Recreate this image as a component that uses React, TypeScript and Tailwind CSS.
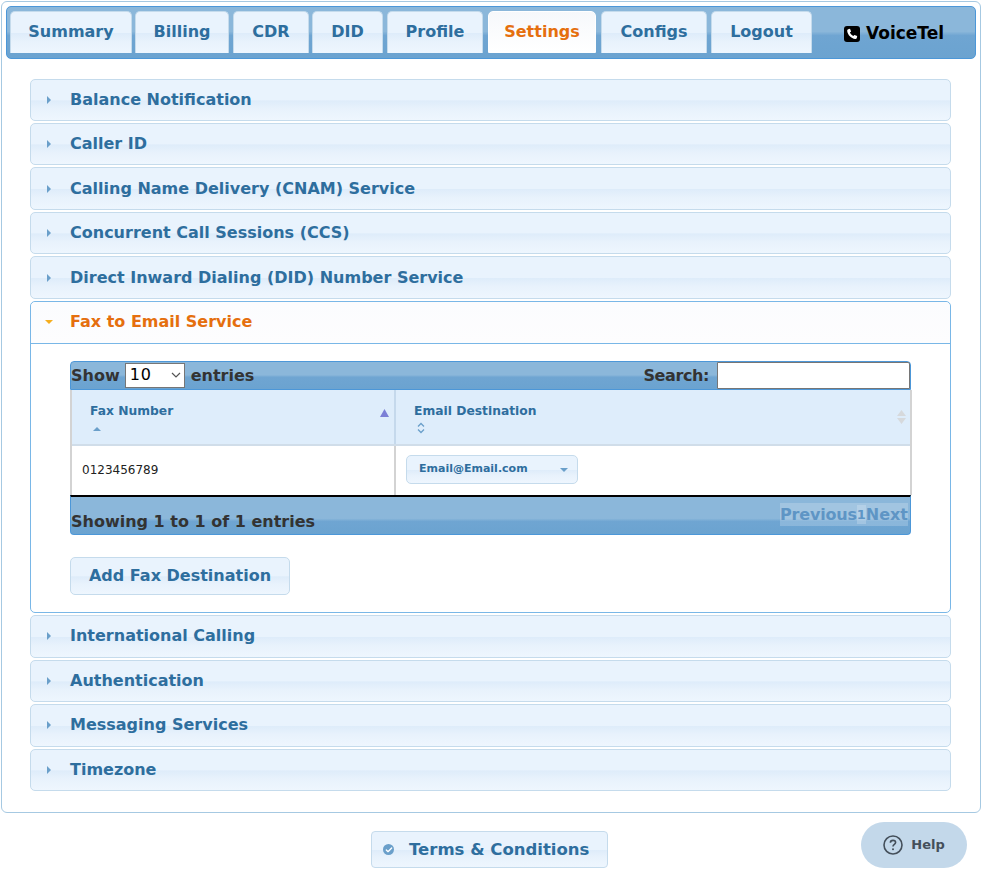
import { Check } from 'lucide-react';

const font = "[font-family:'DejaVu_Sans',sans-serif]";

const tabs = [
  { name: 'Summary', w: 'w-[122px]', ml: '' },
  { name: 'Billing', w: 'w-[94px]', ml: 'ml-[3px]' },
  { name: 'CDR', w: 'w-[76px]', ml: 'ml-[4px]' },
  { name: 'DID', w: 'w-[71px]', ml: 'ml-[3px]' },
  { name: 'Profile', w: 'w-[96px]', ml: 'ml-[4px]' },
  { name: 'Settings', w: 'w-[108px]', ml: 'ml-[5px]' },
  { name: 'Configs', w: 'w-[106px]', ml: 'ml-[5px]' },
  { name: 'Logout', w: 'w-[101px]', ml: 'ml-[4px]' },
];

const lightBtn =
  'bg-[linear-gradient(#e9f3fd_0%,#e9f3fd_50%,#deecfa_52%,#e8f2fc_72%,#eef6fe_100%)] border border-[#c5dbec] text-[#2e6e9e]';
const barBg = 'bg-[linear-gradient(#8bb7da_0%,#8bb7da_48%,#6fa5d2_56%,#6ba3d0_100%)]';
const footBg = 'bg-[linear-gradient(#8bb7da_0%,#8bb7da_58%,#6fa5d2_66%,#6ba3d0_100%)]';

function Row({ label, h }: { label: string; h: string }) {
  return (
    <div className={`flex ${h} items-center rounded-[5px] ${lightBtn}`}>
      <svg width="4" height="8" viewBox="0 0 4 8" className="ml-[16px]">
        <path d="M0 0 L4 4 L0 8 Z" fill="#6a9fca" />
      </svg>
      <span className="ml-[19px] text-[16px] font-bold">{label}</span>
    </div>
  );
}

export default function App() {
  const top = [
    { label: 'Balance Notification', h: 'h-[42px]' },
    { label: 'Caller ID', h: 'h-[42px]' },
    { label: 'Calling Name Delivery (CNAM) Service', h: 'h-[43px]' },
    { label: 'Concurrent Call Sessions (CCS)', h: 'h-[42px]' },
    { label: 'Direct Inward Dialing (DID) Number Service', h: 'h-[43px]' },
  ];
  const bottom = [
    { label: 'International Calling', h: 'h-[43px] pb-px' },
    { label: 'Authentication', h: 'h-[42px]' },
    { label: 'Messaging Services', h: 'h-[43px] pb-px' },
    { label: 'Timezone', h: 'h-[42px]' },
  ];

  return (
    <div className={`relative h-[878px] w-[984px] overflow-hidden bg-white pt-px pl-px ${font}`}>
      <div className="h-[812px] w-[980px] rounded-[6px] border border-[#a6c9e2] bg-white p-1">
        {/* nav bar */}
        <div className={`flex h-[53px] w-[970px] rounded-[5px] border border-[#4c97d8] pt-1 pl-[3px] ${barBg}`}>
          {tabs.map((t) => (
            <div
              key={t.name}
              className={`${t.w} ${t.ml} flex h-[42px] items-center justify-center rounded-t-[5px] pb-px text-[16px] font-bold ${
                t.name === 'Settings'
                  ? 'border border-white bg-[linear-gradient(#f6f8fb,#ffffff)] text-[#e56f0e]'
                  : lightBtn + ' border-b-0'
              }`}
            >
              {t.name}
            </div>
          ))}
          <div className="ml-[32px] flex h-[45px] items-center text-[17px] font-bold text-black">
            <svg width="16" height="16" viewBox="0 0 16 16" className="mr-[6px]">
              <rect width="16" height="16" rx="3" fill="#000" />
              <path d="M4.2 3.2 L6 2.8 L7.1 5.6 L5.9 6.6 C6.5 8 7.8 9.4 9.3 10 L10.4 8.9 L13.2 10 L12.8 11.9 C12.6 12.7 11.9 13 11.2 12.9 C7.2 12.4 3.7 8.9 3.2 4.9 C3.1 4.2 3.5 3.5 4.2 3.2 Z" fill="#fff" />
            </svg>
            VoiceTel
          </div>
        </div>

        {/* accordion */}
        <div className="mt-[20px] ml-[24px] flex w-[921px] flex-col gap-[2px]">
          {top.map((r) => (
            <Row key={r.label} label={r.label} h={r.h} />
          ))}
          <div className="rounded-[5px] border border-[#79b7e7] bg-white">
            <div className="flex h-[42px] items-center rounded-t-[5px] border-b border-[#79b7e7] bg-[linear-gradient(#fbfcfe,#fdfdfe)] pb-px">
              <svg width="8" height="4" viewBox="0 0 8 4" className="ml-[14px]">
                <path d="M0 0 L8 0 L4 4 Z" fill="#f5ae1f" />
              </svg>
              <span className="ml-[17px] text-[16px] font-bold text-[#e56f0e]">Fax to Email Service</span>
            </div>

            <div className="px-[39px] pt-[17px] pb-[17px]">
              {/* table toolbar */}
              <div className={`flex h-[29px] w-[841px] items-center justify-between rounded-t-[4px] border border-[#4c97d8] text-[16px] font-bold text-[#333] ${barBg}`}>
                <div className="flex items-center">
                  <span className="pt-px">Show</span>
                  <div className="mr-[6px] mb-px ml-[5px] flex h-[25px] w-[60px] items-center justify-between border border-[#767676] bg-white pr-[3px] pl-[4px] text-[16px] font-normal text-black">
                    <span className="tracking-[1px]">10</span>
                    <svg width="10" height="6" viewBox="0 0 10 6">
                      <path d="M1 1 L5 5 L9 1" stroke="#555" strokeWidth="1.2" fill="none" />
                    </svg>
                  </div>
                  <span className="pt-px">entries</span>
                </div>
                <div className="flex items-center">
                  <span className="pt-px tracking-[-0.4px]">Search:</span>
                  <div className="ml-[8px] h-[27px] w-[193px] rounded-tr-[2px] border border-[#767676] bg-white" />
                </div>
              </div>

              {/* table */}
              <div className="w-[842px] border-x-2 border-[#d3d3d3]">
                <div className="flex h-[56px] border-b-2 border-[#d0dde9] bg-[#deedfb] text-[12.3px] font-bold text-[#2e6e9e]">
                  <div className="relative w-[324px] border-r-2 border-[#c5d9ec] pt-[12px] pl-[18px]">
                    Fax Number
                    <svg width="8" height="4" viewBox="0 0 8 4" className="mt-[7px] ml-[3px] block">
                      <path d="M0 4 L4 0 L8 4 Z" fill="#6a9fca" />
                    </svg>
                    <svg width="9" height="8" viewBox="0 0 9 8" className="absolute top-[19px] right-[5px]">
                      <path d="M0 8 L4.5 0 L9 8 Z" fill="#7b7fd6" />
                    </svg>
                  </div>
                  <div className="relative flex-1 pt-[12px] pl-[18px]">
                    Email Destination
                    <svg width="8" height="12" viewBox="0 0 8 12" className="mt-[2px] ml-[3px] block">
                      <path d="M1 4.5 L4 1.5 L7 4.5 M1 7.5 L4 10.5 L7 7.5" stroke="#6a9fca" strokeWidth="1.3" fill="none" />
                    </svg>
                    <svg width="9" height="14" viewBox="0 0 9 14" className="absolute top-[20px] right-[4px]">
                      <path d="M0 6 L4.5 0 L9 6 Z M0 8 L9 8 L4.5 14 Z" fill="#d6d9dc" />
                    </svg>
                  </div>
                </div>
                <div className="flex h-[49px] bg-white">
                  <div className="flex w-[324px] items-center border-r-2 border-[#d3d3d3] pb-[2px] pl-[10px] text-[12px] text-[#222]">0123456789</div>
                  <div className="flex flex-1 items-center pb-[2px] pl-[10px]">
                    <div className={`flex h-[29px] w-[172px] items-center justify-between rounded-[5px] pr-[9px] pl-[12px] text-[11px] font-bold ${lightBtn}`}>
                      Email@Email.com
                      <svg width="8" height="4" viewBox="0 0 8 4">
                        <path d="M0 0 L8 0 L4 4 Z" fill="#6a9fca" />
                      </svg>
                    </div>
                  </div>
                </div>
              </div>

              {/* table footer */}
              <div className={`flex h-[40px] w-[841px] justify-between rounded-b-[4px] border border-t-2 border-[#4c97d8] border-t-black pt-[13px] text-[16px] font-bold text-[#333] ${footBg}`}>
                <span className="leading-[24px]">Showing 1 to 1 of 1 entries</span>
                <div className="mt-[-7px] mr-[2px] flex h-[23px] items-center bg-white/20 text-[16px] font-bold text-[#5e95c5]">
                  <span className="tracking-[-0.2px]">Previous</span>
                  <span className="bg-white/20 text-[13px]">1</span>
                  <span>Next</span>
                </div>
              </div>

              <div className={`mt-[22px] flex h-[38px] w-[220px] items-center justify-center rounded-[5px] text-[16px] font-bold ${lightBtn}`}>
                Add Fax Destination
              </div>
            </div>
          </div>
          {bottom.map((r) => (
            <Row key={r.label} label={r.label} h={r.h} />
          ))}
        </div>
      </div>

      {/* footer */}
      <div className={`absolute top-[831px] left-[371px] flex h-[37px] w-[237px] items-center rounded-[4px] text-[16.5px] font-bold ${lightBtn}`}>
        <span className="ml-[11px] flex h-[11px] w-[11px] items-center justify-center rounded-full bg-[#6a9fca]">
          <Check size={8} strokeWidth={4} className="text-white" />
        </span>
        <span className="ml-[15px] pt-px">Terms &amp; Conditions</span>
      </div>
      <div className="absolute top-[822px] left-[861px] flex h-[46px] w-[106px] items-center justify-center rounded-[23px] bg-[#c3d8ea] text-[13px] font-bold text-[#444f5a]">
        <svg width="20" height="20" viewBox="0 0 20 20" className="mr-[8px]">
          <circle cx="10" cy="10" r="9" stroke="#444f5a" strokeWidth="1.6" fill="none" />
          <path d="M7.4 7.8 C7.4 6.2 8.6 5.4 10 5.4 C11.6 5.4 12.6 6.4 12.6 7.6 C12.6 9.4 10 9.4 10 11.4" stroke="#444f5a" strokeWidth="1.6" fill="none" />
          <circle cx="10" cy="14.2" r="1" fill="#444f5a" />
        </svg>
        Help
      </div>
    </div>
  );
}
